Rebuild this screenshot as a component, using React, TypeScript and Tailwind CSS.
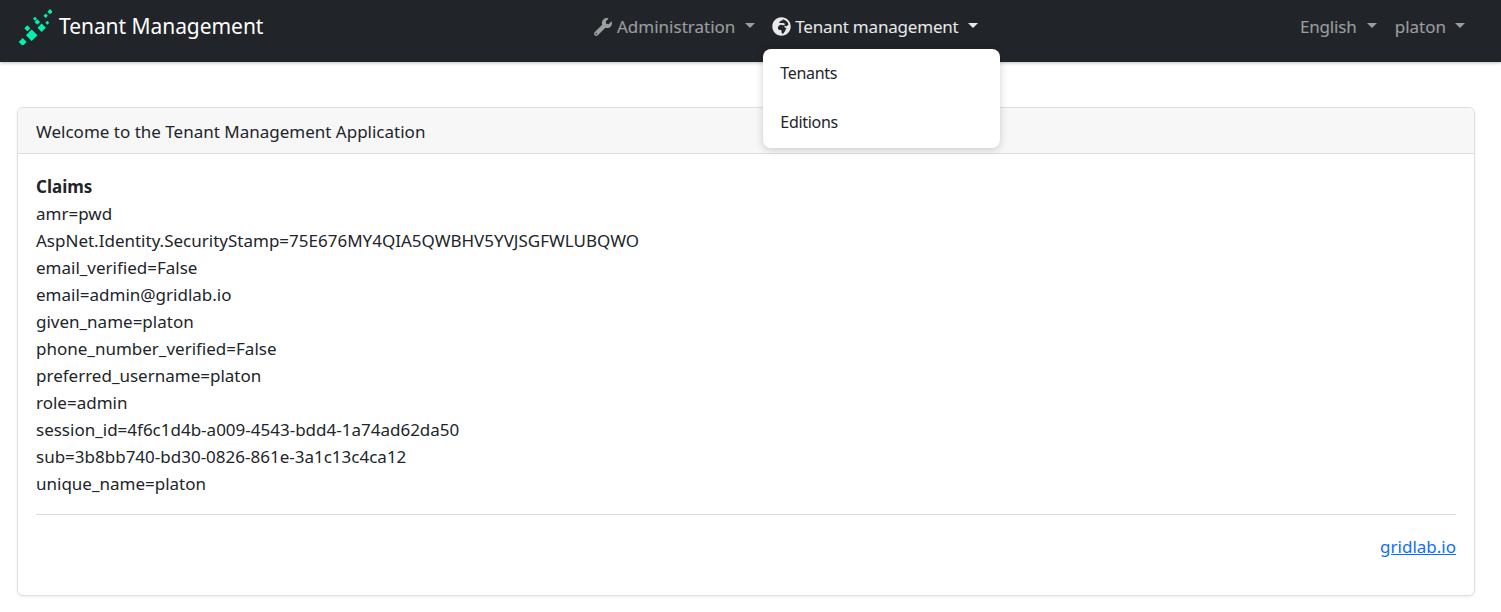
import { FaGlobeAfrica, FaWrench } from "react-icons/fa";

const claims = [
  "amr=pwd",
  "AspNet.Identity.SecurityStamp=75E676MY4QIA5QWBHV5YVJSGFWLUBQWO",
  "email_verified=False",
  "email=admin@gridlab.io",
  "given_name=platon",
  "phone_number_verified=False",
  "preferred_username=platon",
  "role=admin",
  "session_id=4f6c1d4b-a009-4543-bdd4-1a74ad62da50",
  "sub=3b8bb740-bd30-0826-861e-3a1c13c4ca12",
  "unique_name=platon",
];

// x, y, half-size of each diamond in the logo
const logoDots = [
  [31.7, 34.3, 5.8],
  [22.7, 41, 4],
  [27.3, 27.3, 3],
  [41.7, 26.7, 4.2],
  [37.3, 21, 2.8],
  [35, 17.7, 2],
  [47.3, 21.7, 2],
  [45.7, 14.8, 2.2],
  [50, 10.7, 2.6],
];

function Caret({ className }: { className: string }) {
  return <span className={"mt-[-2px] h-0 w-0 border-x-[5px] border-t-[5px] border-x-transparent " + className} />;
}

function Logo() {
  return (
    <svg width="34" height="36" viewBox="18 8 34 36" aria-hidden className="shrink-0">
      <g fill="#04efb0">
        {logoDots.map(([x, y, r]) => (
          <path key={`${x}-${y}`} d={`M${x} ${y - r}L${x + r} ${y}L${x} ${y + r}L${x - r} ${y}Z`} />
        ))}
      </g>
    </svg>
  );
}

export default function App() {
  return (
    <div className="min-h-[612px] bg-white font-['Noto_Sans',sans-serif] text-[17px] leading-[27px] text-[#212529]">
      <nav className="relative flex h-[62px] items-center justify-between bg-[#212529] pl-[18px] pr-[36px] shadow-[0_1px_3px_rgba(0,0,0,0.25)]">
        <a className="flex items-center gap-[7px] pb-[9px] text-[21px] tracking-[-0.05px] text-white">
          <Logo />
          Tenant Management
        </a>

        <div className="absolute left-[594px] top-[13px] flex items-center">
          <a className="flex items-center text-white/55">
            <FaWrench className="mr-[5px] text-[18px]" />
            Administration
            <Caret className="ml-[10px] border-t-white/55" />
          </a>
          <div className="relative ml-[17px]">
            <a className="flex items-center tracking-[-0.2px] text-white/90">
              <FaGlobeAfrica className="mr-[4px] text-[19px]" />
              Tenant management
              <Caret className="ml-[9px] border-t-white/90" />
            </a>
            <div className="absolute left-[-9px] top-[36px] z-10 w-[237px] rounded-[8px] bg-white py-[0.5px] text-[16px] tracking-[-0.3px] shadow-[0_2px_8px_rgba(0,0,0,0.18)]">
              <div className="px-[17px] pb-[12px] pt-[10px]">Tenants</div>
              <div className="px-[17px] pb-[12px] pt-[10px]">Editions</div>
            </div>
          </div>
        </div>

        <div className="mt-[-10px] flex items-center text-white/55">
          <a className="flex items-center tracking-[-0.15px]">
            English
            <Caret className="ml-[10px] border-t-white/55" />
          </a>
          <a className="ml-[18px] flex items-center">
            platon
            <Caret className="ml-[9px] border-t-white/55" />
          </a>
        </div>
      </nav>

      <main className="pl-[17px] pr-[26px] pt-[45px]">
        <section className="h-[489px] rounded-[6px] border border-[#dfdfdf] bg-white shadow-[0_1px_3px_rgba(0,0,0,0.08)]">
          <header className="flex h-[46px] items-center rounded-t-[6px] border-b border-[#dfdfdf] bg-[#f7f7f7] px-[18px] pt-[1px]">
            Welcome to the Tenant Management Application
          </header>
          <div className="px-[18px] pt-[19px]">
            <div className="font-bold">Claims</div>
            {claims.map((claim) => (
              <div key={claim}>{claim}</div>
            ))}
            <hr className="mt-[17px] border-[#d9d9d9]" />
            <div className="mt-[18px] text-right">
              <a className="text-[#0d6efd] underline">gridlab.io</a>
            </div>
          </div>
        </section>
      </main>
    </div>
  );
}
